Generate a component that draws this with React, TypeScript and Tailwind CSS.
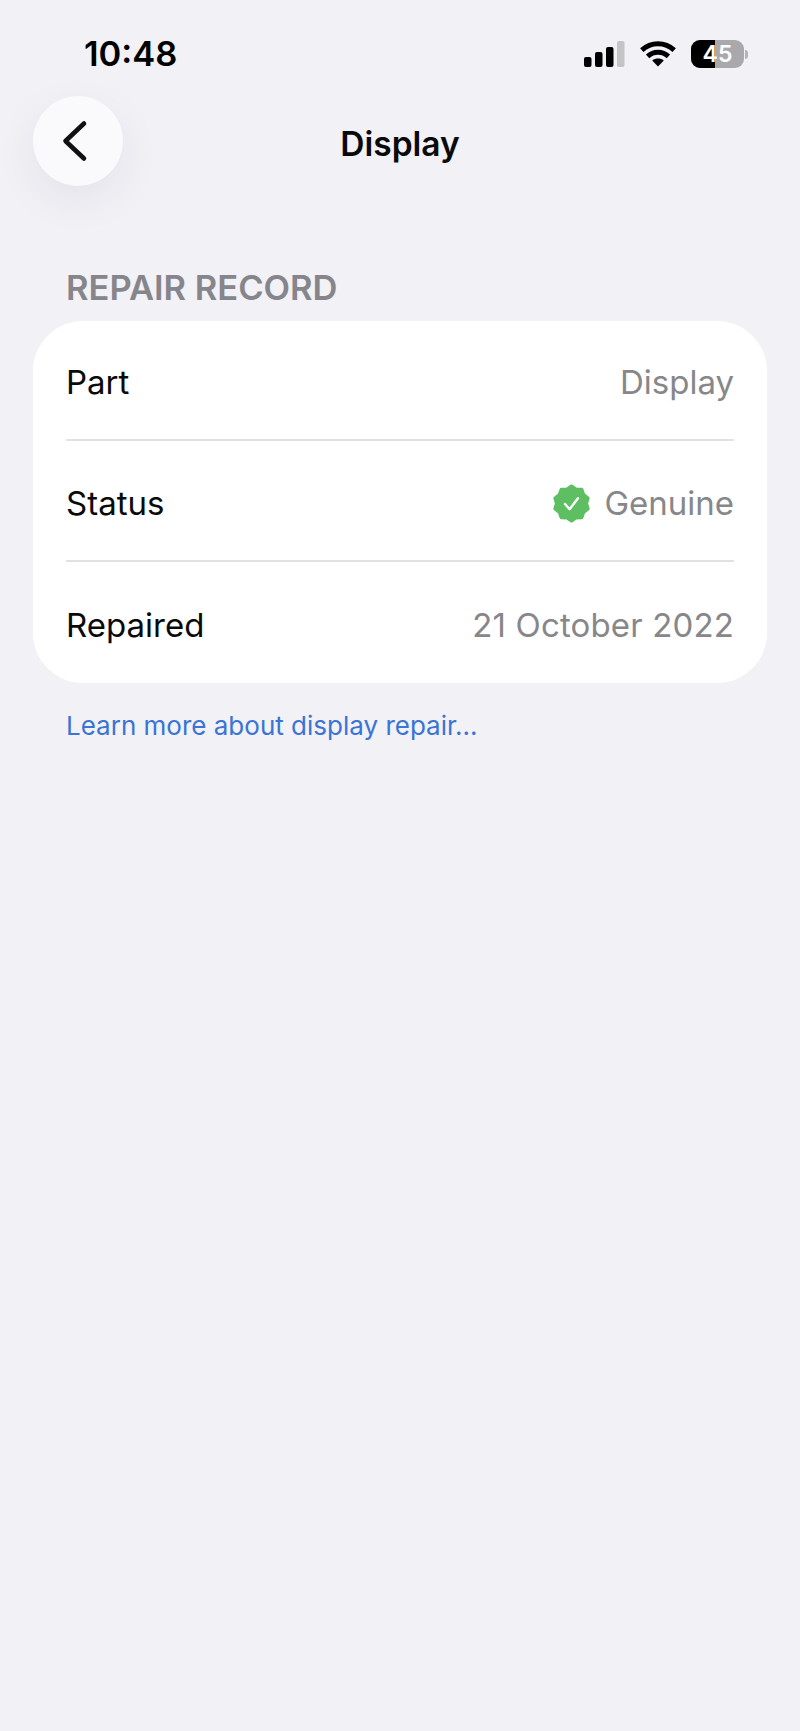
const inter = "font-['Inter','Liberation_Sans',sans-serif]";

// Scalloped outline of the verified badge: ten lobes around the centre.
const badgePoints = Array.from({ length: 20 }, (_, i) => {
  const angle = ((i * 18 - 90) * Math.PI) / 180;
  const radius = i % 2 === 0 ? 17 : 14.6;
  return `${(19.5 + radius * Math.cos(angle)).toFixed(2)},${(19.5 + radius * Math.sin(angle)).toFixed(2)}`;
}).join(" ");

function SignalIcon() {
  return (
    <svg width="41" height="26" viewBox="0 0 41 26" aria-hidden="true">
      <rect x="0" y="16" width="7.5" height="10" rx="2" fill="#000" />
      <rect x="11" y="11" width="7.5" height="15" rx="2" fill="#000" />
      <rect x="22" y="6" width="7.5" height="20" rx="2" fill="#000" />
      <rect x="33" y="0" width="7.5" height="26" rx="2" fill="#c4c4c7" />
    </svg>
  );
}

function WifiIcon() {
  return (
    <svg width="36" height="26" viewBox="0 0 36 26" aria-hidden="true" fill="none" stroke="#000" strokeWidth="5">
      <path d="M1.8 9.2C11 .6 25 .6 34.2 9.2" />
      <path d="M7.6 15.4C13.6 10 22.4 10 28.4 15.4" />
      <path d="M18 25.6l-5.8-6.2c3.4-2.6 8.2-2.6 11.6 0z" fill="#000" stroke="none" />
    </svg>
  );
}

function Battery() {
  return (
    <div className="flex items-center gap-[1px]">
      <div className="relative flex h-[28px] w-[53px] overflow-hidden rounded-[9px] bg-[#a9a9ad]">
        <div className="w-[24px] bg-black" />
        <span className="absolute inset-0 flex items-center justify-center text-[23px] font-semibold leading-none text-white">
          45
        </span>
      </div>
      <div className="h-[9px] w-[3px] rounded-r-full bg-[#b4b4b8]" />
    </div>
  );
}

function VerifiedBadge() {
  return (
    <svg width="39" height="39" viewBox="0 0 39 39" aria-hidden="true">
      <polygon points={badgePoints} fill="#5ebf62" stroke="#5ebf62" strokeWidth="4" strokeLinejoin="round" />
      <path d="M13 20l4.6 5.2 8.4-11" fill="none" stroke="#fff" strokeWidth="2.4" strokeLinecap="round" strokeLinejoin="round" />
    </svg>
  );
}

function Row({ label, children, className }: { label: string; children: React.ReactNode; className: string }) {
  return (
    <div className={`flex items-center justify-between pt-[6px] ${className}`}>
      <span className="text-[33px] text-[#0a0a0a]">{label}</span>
      <div className="flex items-center gap-[13px] text-[33px] text-[#87878a]">{children}</div>
    </div>
  );
}

export default function App() {
  return (
    <div className={`${inter} flex min-h-[1731px] w-[800px] flex-col bg-[#f1f1f6]`}>
      {/* Status bar */}
      <div className="flex h-[96px] items-start justify-between pl-[84px] pr-[52px] pt-[34px]">
        <span className="text-[34.5px] font-semibold leading-[40px] text-black">10:48</span>
        <div className="flex items-center gap-[15px] pt-[6px]">
          <SignalIcon />
          <WifiIcon />
          <Battery />
        </div>
      </div>

      {/* Navigation header */}
      <div className="grid grid-cols-[90px_1fr_90px] items-center px-[33px]">
        <button className="flex h-[90px] w-[90px] items-center justify-center rounded-full bg-[#fafafd] shadow-[0_14px_44px_rgba(40,40,70,0.07)]">
          <svg className="mr-[6px]" width="26" height="42" viewBox="0 0 26 42" fill="none" stroke="#111" strokeWidth="4.6" strokeLinecap="round" strokeLinejoin="round" aria-hidden="true">
            <path d="M22 3.5L3.5 21 22 38.5" />
          </svg>
        </button>
        <h1 className="pt-[6px] text-center text-[33.5px] font-semibold leading-[40px] text-[#0a0a0a]">Display</h1>
        <div />
      </div>

      {/* Repair record */}
      <div className="px-[33px] pt-[80px]">
        <h2 className="px-[33px] text-[34.5px] font-semibold leading-[44px] text-[#85858b]">REPAIR RECORD</h2>
        <div className="mt-[11px] rounded-[50px] bg-white px-[33px]">
          <Row label="Part" className="h-[120px] border-b-2 border-[#e2e2e4]">
            <span>Display</span>
          </Row>
          <Row label="Status" className="h-[121px] border-b-2 border-[#e2e2e4]">
            <VerifiedBadge />
            <span>Genuine</span>
          </Row>
          <Row label="Repaired" className="h-[121px]">
            <span className="tracking-[0.15px]">21 October 2022</span>
          </Row>
        </div>
        <a className="mt-[25px] block px-[33px] text-[26px] leading-[36px] text-[#3a74d4]">Learn more about display repair...</a>
      </div>
    </div>
  );
}
